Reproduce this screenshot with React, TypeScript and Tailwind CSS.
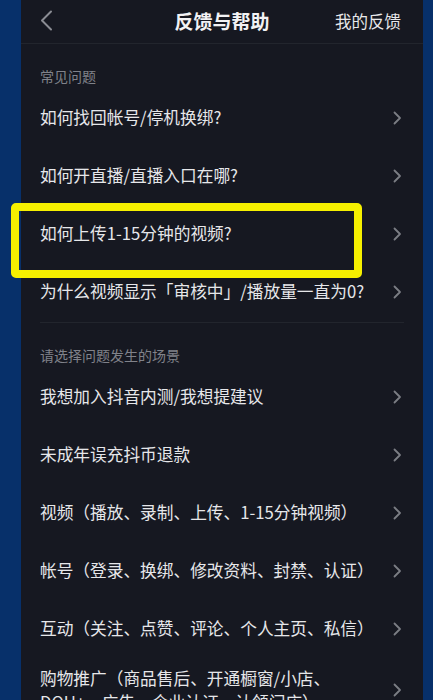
import { FC } from 'react'

const faq = [
  '如何找回帐号/停机换绑?',
  '如何开直播/直播入口在哪?',
  '如何上传1-15分钟的视频?',
  '为什么视频显示「审核中」/播放量一直为0?',
]

const scenes = [
  '我想加入抖音内测/我想提建议',
  '未成年误充抖币退款',
  '视频（播放、录制、上传、1-15分钟视频）',
  '帐号（登录、换绑、修改资料、封禁、认证）',
  '互动（关注、点赞、评论、个人主页、私信）',
]

const Chevron: FC = () => (
  <svg width="9" height="14" viewBox="0 0 9 14" className="shrink-0">
    <polyline points="1.5,1.5 7,7 1.5,12.5" fill="none" stroke="#7b7d84" strokeWidth="1.8" strokeLinecap="round" strokeLinejoin="round" />
  </svg>
)

const Row: FC<{ text: string }> = ({ text }) => (
  <div className="h-[58px] flex items-center justify-between pl-[19px] pr-[21px]">
    <span className="text-[16.7px] text-[#e6e7ea]">{text}</span>
    <Chevron />
  </div>
)

const Label: FC<{ text: string }> = ({ text }) => (
  <div className="h-[45px] pt-[22px] pl-[19px] text-[14px] leading-[20px] text-[#80828a]">{text}</div>
)

export default function App() {
  return (
    <div
      className="relative h-[700px] w-[433px] overflow-hidden bg-[#07306a]"
      style={{ fontFamily: '"Noto Sans CJK SC", "Noto Sans", sans-serif' }}
    >
      <div className="ml-[21px] h-full w-[402px] bg-[#161821]">
        {/* header */}
        <div className="relative h-[44px] flex items-center justify-center border-b border-[#22252d]">
          <svg width="13" height="21" viewBox="0 0 13 21" className="absolute left-[19px] top-[10px]">
            <polyline points="11,1.5 2,10.5 11,19.5" fill="none" stroke="#8a8c93" strokeWidth="2" strokeLinecap="round" strokeLinejoin="round" />
          </svg>
          <span className="text-[19px] font-bold text-[#f2f2f4]">反馈与帮助</span>
          <span className="absolute right-[22px] top-[9px] text-[16.5px] text-[#e8e8ea]">我的反馈</span>
        </div>

        <Label text="常见问题" />
        {faq.map(t => (
          <Row key={t} text={t} />
        ))}

        <div className="mx-[19px] mt-[1px] h-px bg-[#22252d]" />

        <Label text="请选择问题发生的场景" />
        {scenes.map(t => (
          <Row key={t} text={t} />
        ))}

        <div className="flex items-center justify-between pl-[19px] pr-[21px] pt-[8px]">
          <span className="text-[16.7px] leading-[24px] text-[#e6e7ea]">
            购物推广（商品售后、开通橱窗/小店、
            <br />
            DOU+、广告、企业认证、认领门店）
          </span>
          <Chevron />
        </div>
      </div>

      {/* annotation */}
      <div className="absolute left-[11px] top-[203px] h-[75px] w-[351px] rounded-[5px] border-[8px] border-[#f6f000]" />
    </div>
  )
}
